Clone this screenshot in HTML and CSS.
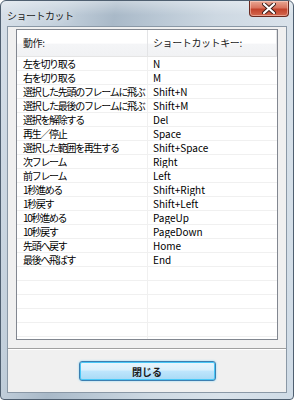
FILE: index.html
```html
<!DOCTYPE html>
<html lang="ja">
<head>
    <meta charset="UTF-8">
    <title>ショートカット</title>
    <link rel="stylesheet" href="styles.css">
</head>
<body>

    <!-- Dialog window -->
    <div class="window">
        <div class="titlebar">
            <div class="title">ショートカット</div>
            <div class="close-btn">
                <svg width="14" height="11" viewBox="0 0 14 11">
                    <path d="M2 1 L12 10 M12 1 L2 10" stroke="#3a1d18" stroke-width="4" stroke-linecap="round"/>
                    <path d="M2 1 L12 10 M12 1 L2 10" stroke="#ffffff" stroke-width="2.2" stroke-linecap="round"/>
                </svg>
            </div>
        </div>

        <div class="client">
            <div class="panel">
                <div class="listview">
                    <div class="lv-header">
                        <div class="cell">動作:</div>
                        <div class="cell">ショートカットキー:</div>
                    </div>
                    <div class="lv-body">
                        <div class="row"><div class="cell">左を切り取る</div><div class="cell">N</div></div>
                        <div class="row"><div class="cell">右を切り取る</div><div class="cell">M</div></div>
                        <div class="row"><div class="cell">選択した先頭のフレームに飛ぶ</div><div class="cell">Shift+N</div></div>
                        <div class="row"><div class="cell">選択した最後のフレームに飛ぶ</div><div class="cell">Shift+M</div></div>
                        <div class="row"><div class="cell">選択を解除する</div><div class="cell">Del</div></div>
                        <div class="row"><div class="cell">再生／停止</div><div class="cell">Space</div></div>
                        <div class="row"><div class="cell">選択した範囲を再生する</div><div class="cell">Shift+Space</div></div>
                        <div class="row"><div class="cell">次フレーム</div><div class="cell">Right</div></div>
                        <div class="row"><div class="cell">前フレーム</div><div class="cell">Left</div></div>
                        <div class="row"><div class="cell">1秒進める</div><div class="cell">Shift+Right</div></div>
                        <div class="row"><div class="cell">1秒戻す</div><div class="cell">Shift+Left</div></div>
                        <div class="row"><div class="cell">10秒進める</div><div class="cell">PageUp</div></div>
                        <div class="row"><div class="cell">10秒戻す</div><div class="cell">PageDown</div></div>
                        <div class="row"><div class="cell">先頭へ戻す</div><div class="cell">Home</div></div>
                        <div class="row"><div class="cell">最後へ飛ばす</div><div class="cell">End</div></div>
                        <div class="row"><div class="cell"></div><div class="cell"></div></div>
                        <div class="row"><div class="cell"></div><div class="cell"></div></div>
                        <div class="row"><div class="cell"></div><div class="cell"></div></div>
                        <div class="row"><div class="cell"></div><div class="cell"></div></div>
                        <div class="row"><div class="cell"></div><div class="cell"></div></div>
                        <div class="row"><div class="cell"></div><div class="cell"></div></div>
                    </div>
                </div>
            </div>

            <div class="button-bar">
                <button class="close-dialog">閉じる</button>
            </div>
        </div>
    </div>

</body>
</html>
```

FILE: styles.css
```css
body {
    margin: 0;
    padding: 0;
    background-color: #ffffff;
    font-family: 'Noto Sans CJK JP', 'Liberation Sans', sans-serif;
    color: #000000;
}

/* Window frame */
.window {
    width: 294px;
    height: 400px;
    box-sizing: border-box;
    border: 1px solid #4f5f70;
    border-radius: 6px 6px 4px 4px;
    padding: 0 6px 6px 6px;
    display: flex;
    flex-direction: column;
    background:
        linear-gradient(180deg, rgba(255, 255, 255, 0.35) 0, rgba(255, 255, 255, 0) 14px),
        linear-gradient(100deg, #d7e0e9 0, #c2cfdb 18%, #a9b9c8 32%, #bac8d5 45%, #cdd8e2 60%, #d9e2ea 80%, #cfdbe6 100%);
    overflow: hidden;
}

.titlebar {
    height: 25px;
    display: flex;
    justify-content: space-between;
    align-items: flex-start;
    flex-shrink: 0;
}

.title {
    font-size: 10px;
    color: #1c1c1c;
    margin-top: 7px;
    letter-spacing: -0.5px;
    text-shadow: 0 0 6px rgba(255, 255, 255, 0.9);
}

.close-btn {
    width: 40px;
    height: 16px;
    margin-right: -2px;
    box-sizing: border-box;
    border: 1px solid #6a2a20;
    border-top: none;
    border-radius: 0 0 4px 4px;
    background: linear-gradient(180deg, #e9a894 0, #d9745f 45%, #c2432c 55%, #d4694f 100%);
    display: flex;
    align-items: center;
    justify-content: center;
    box-shadow: inset 0 0 0 1px rgba(255, 220, 210, 0.5);
}

/* Client area */
.client {
    flex: 1;
    background-color: #f0f0f0;
    border: 1px solid #8a98a6;
    display: flex;
    flex-direction: column;
}

.panel {
    padding: 2px 8px 8px 8px;
    border-bottom: 1px solid #a0a0a0;
    box-shadow: 0 1px 0 #ffffff;
}

.listview {
    height: 311px;
    box-sizing: border-box;
    border: 1px solid #828790;
    background-color: #ffffff;
    overflow: hidden;
}

.lv-header {
    display: grid;
    grid-template-columns: 131px 1fr;
    height: 27px;
    box-sizing: border-box;
    border-bottom: 1px solid #e5e5e5;
    background: linear-gradient(180deg, #ffffff 0, #ffffff 50%, #f4f5f7 55%, #f1f2f4 100%);
}

.lv-header .cell {
    font-size: 10px;
    line-height: 26px;
    padding-left: 6px;
    color: #1a1a1a;
    border-right: 1px solid #e3e4e6;
    letter-spacing: -0.4px;
}

.lv-header .cell:last-child {
    padding-left: 5px;
}

.row {
    display: grid;
    grid-template-columns: 131px 1fr;
    height: 14px;
    box-sizing: border-box;
    border-bottom: 1px solid #f0f0f0;
}

.row .cell {
    font-size: 10px;
    line-height: 13px;
    padding-left: 6px;
    white-space: nowrap;
    overflow: hidden;
    letter-spacing: -1.3px;
}

.row .cell:first-child {
    border-right: 1px solid #f0f0f0;
}

.row .cell:last-child {
    padding-left: 5px;
    letter-spacing: 0;
}

/* Bottom button */
.button-bar {
    flex: 1;
    display: flex;
    justify-content: center;
    padding-top: 12px;
}

.close-dialog {
    width: 137px;
    height: 20px;
    padding: 0;
    font-family: 'Noto Sans CJK JP', sans-serif;
    font-size: 10px;
    font-weight: bold;
    color: #1a1a1a;
    border: 1px solid #3c7fb1;
    border-radius: 3px;
    background: linear-gradient(180deg, #eaf6fd 0, #d9f0fc 45%, #bee6fd 50%, #a7d9f5 100%);
    box-shadow: inset 0 0 0 1px #48c8f7, 0 0 2px #7ad4f8;
}
```
